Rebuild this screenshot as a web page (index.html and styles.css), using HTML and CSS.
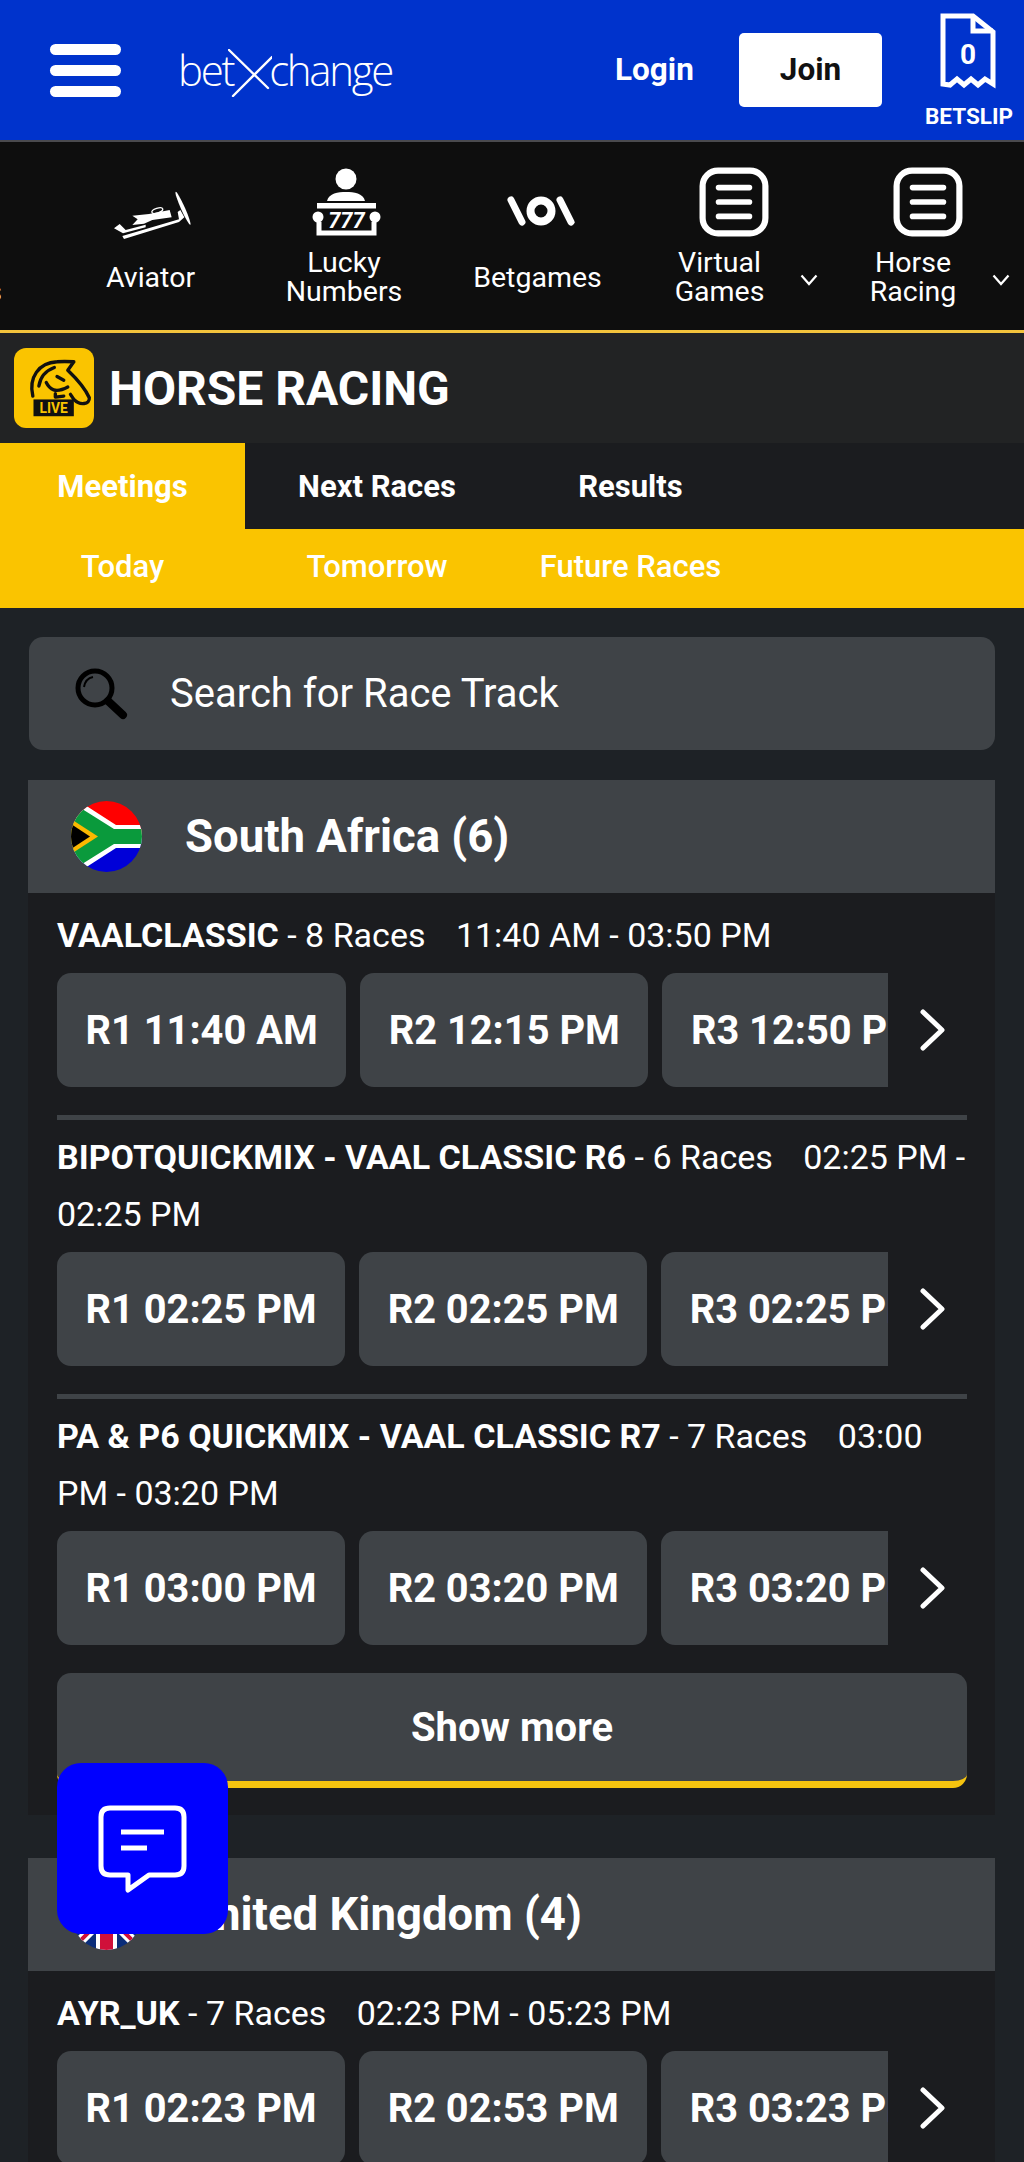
FILE: index.html
```html
<!DOCTYPE html>
<html lang="en">
<head>
<meta charset="utf-8">
<title>Horse Racing - betXchange</title>
<link rel="stylesheet" href="styles.css">
</head>
<body>
<div class="page">
  <header class="topbar">
    <div class="burger"><span></span><span></span><span></span></div>
    <div class="logo"><span>bet</span><svg class="logo-x" viewBox="0 0 44 48"><path d="M1 1 L40 39 M44 8 L5 47" fill="none" stroke="#fff" stroke-width="2.400" stroke-linecap="round"/></svg><span>change</span></div>
    <a class="login">Login</a>
    <a class="join">Join</a>
    <div class="betslip">
      <svg class="slip-icon" viewBox="0 0 56 76"><path d="M3 3 H33 L53 19 V71 L45 66 L38 72 L31 66 L24 72 L17 66 L10 72 L3 71 Z" fill="none" stroke="#fff" stroke-width="5"/><path d="M33 3 V18 H53" fill="none" stroke="#fff" stroke-width="5"/><text x="28" y="51" text-anchor="middle" class="slip-num">0</text></svg>
      <span class="slip-label">BETSLIP</span>
    </div>
  </header>

  <nav class="games">
    <div class="games-track">
      <div class="game"><div class="game-icon"></div><div class="game-label"><span>Live<br>Games</span></div></div>
      <div class="game">
        <div class="game-icon">
          <svg class="icon-plane" viewBox="0 0 330 210"><g fill="#fff"><path d="M100 107 L150 102 L212 90 L218 112 L160 120 L135 131 L100 135 L116 118 Z"/><path d="M70 168 L240 118 L236 96 L244 90 L256 112 L240 126 L75 177 Z"/><path d="M45 145 L62 132 L80 150 L140 134 L140 142 L72 160 Z"/><ellipse cx="252" cy="85" rx="6" ry="54" transform="rotate(-24 252 85)"/></g><ellipse cx="175" cy="92" rx="17" ry="7" fill="none" stroke="#fff" stroke-width="4" transform="rotate(-18 175 92)"/></svg>
        </div>
        <div class="game-label"><span>Aviator</span></div>
      </div>
      <div class="game">
        <div class="game-icon">
          <svg class="icon-lucky" viewBox="0 0 70 68"><circle cx="34" cy="11" r="10.500" fill="#fff"/><path d="M15 33 C17 25 26 24 34 24 C42 24 51 25 53 33 Z" fill="#fff"/><rect x="5" y="35" width="59" height="5.500" fill="#fff"/><circle cx="6" cy="49" r="5.500" fill="#fff"/><circle cx="63" cy="49" r="5.500" fill="#fff"/><path d="M7 54 V65 H62 V54" fill="none" stroke="#fff" stroke-width="5"/><text x="34.500" y="60" text-anchor="middle" class="lucky-num">777</text></svg>
        </div>
        <div class="game-label"><span>Lucky<br>Numbers</span></div>
      </div>
      <div class="game">
        <div class="game-icon">
          <svg class="icon-bet" viewBox="0 0 68 30"><g fill="none" stroke="#fff" stroke-linecap="round"><path d="M4 4 L15 26" stroke-width="7"/><circle cx="34" cy="15" r="10.500" stroke-width="8"/><path d="M53 4 L64 26" stroke-width="7"/></g></svg>
        </div>
        <div class="game-label"><span>Betgames</span></div>
      </div>
      <div class="game">
        <div class="game-icon">
          <svg class="icon-menu" viewBox="0 0 68 68"><rect x="3.500" y="3.500" width="61" height="61" rx="15" fill="none" stroke="#fff" stroke-width="6"/><path d="M19 20 H49 M19 34 H49 M19 48 H49" stroke="#fff" stroke-width="5.500" stroke-linecap="round"/></svg>
        </div>
        <div class="game-label has-menu"><span>Virtual<br>Games</span><svg class="chev" viewBox="0 0 18 12"><path d="M1.500 1.500 L9 10 L16.500 1.500" fill="none" stroke="#fff" stroke-width="2.200"/></svg></div>
      </div>
      <div class="game">
        <div class="game-icon">
          <svg class="icon-menu" viewBox="0 0 68 68"><rect x="3.500" y="3.500" width="61" height="61" rx="15" fill="none" stroke="#fff" stroke-width="6"/><path d="M19 20 H49 M19 34 H49 M19 48 H49" stroke="#fff" stroke-width="5.500" stroke-linecap="round"/></svg>
        </div>
        <div class="game-label has-menu"><span>Horse<br>Racing</span><svg class="chev" viewBox="0 0 18 12"><path d="M1.500 1.500 L9 10 L16.500 1.500" fill="none" stroke="#fff" stroke-width="2.200"/></svg></div>
      </div>
    </div>
  </nav>

  <div class="title-bar">
    <svg class="live-icon" viewBox="12 12 238 238"><rect x="12" y="12" width="238" height="238" rx="36" fill="#fac400"/><g fill="none" stroke="#111" stroke-width="10" stroke-linecap="round" stroke-linejoin="round"><path d="M68 155 C55 100 85 56 140 53 C160 51 175 52 190 53 L172 78 C195 100 225 135 236 160 C238 180 208 184 190 165 L180 150"/><path d="M86 125 C90 100 105 80 132 70"/><path d="M108 115 C118 135 135 148 172 128"/><path d="M135 148 L135 158 L160 155"/><path d="M140 97 L160 108"/></g><rect x="70" y="165" width="120" height="50" fill="#111"/><text x="130" y="205" text-anchor="middle" class="live-text">LIVE</text></svg>
    <h1 class="title">HORSE RACING</h1>
  </div>

  <div class="tabs">
    <a class="tab tab-active">Meetings</a>
    <a class="tab">Next Races</a>
    <a class="tab">Results</a>
  </div>
  <div class="tabs tabs-sub">
    <a class="tab">Today</a>
    <a class="tab">Tomorrow</a>
    <a class="tab">Future Races</a>
  </div>

  <main class="content">
    <div class="search">
      <svg class="search-icon" viewBox="0 0 56 56"><circle cx="22" cy="22" r="17" fill="none" stroke="#000" stroke-width="5"/><path d="M11 21 C12 15 15 12 20 11" fill="none" stroke="#000" stroke-width="2"/><path d="M35 35 L50 49" stroke="#000" stroke-width="8" stroke-linecap="round"/></svg>
      <span>Search for Race Track</span>
    </div>

    <section class="country">
      <div class="country-head">
        <svg class="flag" viewBox="0 0 71 71"><defs><clipPath id="fc1"><circle cx="35.500" cy="35.500" r="35.500"/></clipPath></defs><g clip-path="url(#fc1)"><rect width="71" height="36" fill="#f00"/><rect y="36" width="71" height="35" fill="#0000d8"/><path d="M0 -5 L45 24 H71 V47 H45 L0 76 Z" fill="#fff"/><path d="M0 1 L43 28 H71 V43 H43 L0 70 Z" fill="#0a9a3c"/><path d="M0 18 L27 35.500 L0 53 Z" fill="#fbb800"/><path d="M0 23 L19 35.500 L0 48 Z" fill="#000"/></g></svg>
        <h2>South Africa (6)</h2>
      </div>
      <div class="country-body">
        <div class="meeting">
          <p class="meta"><b>VAALCLASSIC</b> - 8 Races <span class="time">11:40 AM - 03:50 PM</span></p>
          <div class="races">
            <div class="race-list"><a class="race">R1 11:40 AM</a><a class="race">R2 12:15 PM</a><a class="race">R3 12:50 PM</a></div>
            <svg class="next" viewBox="0 0 26 42"><path d="M3 3 L22 21 L3 39" fill="none" stroke="#fff" stroke-width="5" stroke-linecap="round" stroke-linejoin="round"/></svg>
          </div>
        </div>
        <div class="meeting">
          <p class="meta"><b>BIPOTQUICKMIX - VAAL CLASSIC R6</b> - 6 Races <span class="time">02:25 PM - 02:25 PM</span></p>
          <div class="races">
            <div class="race-list"><a class="race">R1 02:25 PM</a><a class="race">R2 02:25 PM</a><a class="race">R3 02:25 PM</a></div>
            <svg class="next" viewBox="0 0 26 42"><path d="M3 3 L22 21 L3 39" fill="none" stroke="#fff" stroke-width="5" stroke-linecap="round" stroke-linejoin="round"/></svg>
          </div>
        </div>
        <div class="meeting">
          <p class="meta"><b>PA &amp; P6 QUICKMIX - VAAL CLASSIC R7</b> - 7 Races <span class="time">03:00 PM - 03:20 PM</span></p>
          <div class="races">
            <div class="race-list"><a class="race">R1 03:00 PM</a><a class="race">R2 03:20 PM</a><a class="race">R3 03:20 PM</a></div>
            <svg class="next" viewBox="0 0 26 42"><path d="M3 3 L22 21 L3 39" fill="none" stroke="#fff" stroke-width="5" stroke-linecap="round" stroke-linejoin="round"/></svg>
          </div>
        </div>
        <a class="show-more">Show more</a>
      </div>
    </section>

    <section class="country">
      <div class="country-head">
        <svg class="flag" viewBox="0 0 71 71"><defs><clipPath id="fc2"><circle cx="35.500" cy="35.500" r="35.500"/></clipPath></defs><g clip-path="url(#fc2)"><rect width="71" height="71" fill="#0a2d7a"/><path d="M0 0 L71 71 M71 0 L0 71" stroke="#fff" stroke-width="10"/><path d="M0 0 L71 71 M71 0 L0 71" stroke="#d0103a" stroke-width="4"/><rect x="25" width="21" height="71" fill="#fff"/><rect y="25" width="71" height="21" fill="#fff"/><rect x="29" width="13" height="71" fill="#d0103a"/><rect y="29" width="71" height="13" fill="#d0103a"/></g></svg>
        <h2>United Kingdom (4)</h2>
      </div>
      <div class="country-body">
        <div class="meeting">
          <p class="meta"><b>AYR_UK</b> - 7 Races <span class="time">02:23 PM - 05:23 PM</span></p>
          <div class="races">
            <div class="race-list"><a class="race">R1 02:23 PM</a><a class="race">R2 02:53 PM</a><a class="race">R3 03:23 PM</a></div>
            <svg class="next" viewBox="0 0 26 42"><path d="M3 3 L22 21 L3 39" fill="none" stroke="#fff" stroke-width="5" stroke-linecap="round" stroke-linejoin="round"/></svg>
          </div>
        </div>
      </div>
    </section>
  </main>

  <button class="chat" type="button" aria-label="Chat">
    <svg viewBox="0 0 171 171"><path d="M53 45 H118 Q127 45 127 54 V103 Q127 112 118 112 H92 L71 127 V112 H53 Q44 112 44 103 V54 Q44 45 53 45 Z" fill="none" stroke="#fff" stroke-width="5" stroke-linejoin="round"/><path d="M64 69 H107 M64 85 H90" stroke="#fff" stroke-width="5"/></svg>
  </button>
</div>
</body>
</html>
```

FILE: styles.css
```css
* { box-sizing: border-box; }
html, body { margin: 0; padding: 0; }
body { background: #1e2226; color: #fff; font-family: Roboto, "Liberation Sans", sans-serif; }
.page { position: relative; width: 1024px; height: 2162px; overflow: hidden; }
p, h1, h2 { margin: 0; }

.topbar { height: 142px; background: #0033cc; border-bottom: 2px solid #4a4a4e; display: flex; align-items: center; padding-left: 50px; }
.burger { width: 71px; display: flex; flex-direction: column; gap: 10px; }
.burger span { display: block; height: 11px; background: #fff; border-radius: 6px; }
.logo { margin-left: 57px; width: 216px; height: 60px; display: flex; align-items: flex-start; font-family: "Open Sans", sans-serif; font-weight: 300; font-size: 42px; letter-spacing: -2.300px; line-height: 60px; }
.logo-x { width: 44px; height: 48px; flex: none; margin: 9px -3px 0 -5px; }
.login { margin-left: 221px; padding-bottom: 2px; font-size: 31.500px; font-weight: 700; width: 78px; white-space: nowrap; }
.join { margin-left: 46px; width: 143px; height: 74px; padding-bottom: 2px; background: #fff; color: #111; border-radius: 5px; font-size: 31.500px; font-weight: 700; display: flex; align-items: center; justify-content: center; }
.betslip { margin-left: 43px; width: 88px; display: flex; flex-direction: column; align-items: center; }
.slip-icon { width: 56px; height: 76px; margin: 0 3px 16px 0; }
.slip-num { font: 700 28px Roboto, sans-serif; fill: #fff; }
.slip-label { font-size: 22.500px; font-weight: 700; line-height: 22px; }

.games { height: 191px; background: #0e0e0e; border-bottom: 3px solid #f3c33c; overflow: hidden; }
.games-track { display: flex; margin-left: -136.750px; padding-top: 25px; }
.game { flex: 0 0 193.500px; display: flex; flex-direction: column; align-items: center; }
.game-icon { height: 70px; display: flex; align-items: center; justify-content: center; }
.icon-plane { width: 110px; height: 70px; margin-top: 26px; }
.icon-lucky { width: 70px; height: 68px; }
.icon-bet { width: 68px; height: 30px; margin-top: 18px; }
.icon-menu { width: 70px; height: 70px; }
.lucky-num { font: italic 700 22px Roboto, sans-serif; fill: #fff; }
.game-label { height: 58px; margin-top: 11px; display: flex; align-items: center; justify-content: center; font-size: 28.500px; line-height: 29px; text-align: center; padding-right: 6px; white-space: nowrap; }
.game-label.has-menu { padding-right: 0; padding-left: 25px; }
.chev { width: 18px; height: 12px; margin: 6px 0 0 36px; flex: none; }

.title-bar { height: 110px; background: #222324; display: flex; align-items: center; padding-left: 14px; }
.live-icon { width: 80px; height: 80px; flex: none; }
.title { margin-left: 15px; font-size: 48px; font-weight: 700; }
.live-text { font: 700 41px Roboto, sans-serif; fill: #fac400; }

.tabs { display: grid; grid-template-columns: 245px 264px 243px 1fr; height: 86px; background: #1b1c1f; }
.tab { display: flex; align-items: center; justify-content: center; font-size: 31px; font-weight: 700; }
.tab-active { background: #fac400; }
.tabs-sub { height: 79px; background: #fac400; padding-bottom: 5px; }
.tabs-sub .tab { font-weight: 500; }

.content { padding: 29px 29px 0 28px; display: flex; flex-direction: column; }
.search { height: 113px; margin-left: 1px; background: #3f4347; border-radius: 14px; display: flex; align-items: center; padding-left: 44px; font-size: 40px; margin-bottom: 30px; }
.search-icon { width: 56px; height: 56px; margin-right: 41px; flex: none; }

.country { margin-bottom: 43px; }
.country-head { height: 113px; background: #3f4347; display: flex; align-items: center; padding-left: 43px; }
.flag { width: 71px; height: 71px; flex: none; margin-right: 43px; }
.country-head h2 { font-size: 45.500px; font-weight: 700; }
.country-body { background: #1b1c1f; padding: 14px 28px 27px 29px; }

.meeting + .meeting { border-top: 5px solid #3f4347; padding-top: 9px; }
.meeting { margin-bottom: 28px; }
.meta { font-size: 34px; line-height: 57px; margin: 0 0 9px; }
.meta b { font-weight: 700; }
.time { margin-left: 22px; }
.races { display: flex; align-items: center; }
.race-list { width: 831px; display: flex; gap: 14px; overflow: hidden; flex: none; }
.race { flex: none; height: 114px; padding: 0 28.500px; background: #3f4347; border-radius: 14px; display: flex; align-items: center; font-size: 39.800px; font-weight: 700; white-space: nowrap; }
.next { width: 26px; height: 42px; margin-left: 32px; flex: none; }

.show-more { height: 115px; background: #3f4347; border-bottom: 7px solid #f5c30f; border-radius: 14px; display: flex; align-items: center; justify-content: center; font-size: 40px; font-weight: 700; }

.chat { position: absolute; left: 57px; top: 1763px; width: 171px; height: 171px; padding: 0; border: 0; border-radius: 24px; background: #0000ff; }
.chat svg { display: block; width: 171px; height: 171px; }
```
